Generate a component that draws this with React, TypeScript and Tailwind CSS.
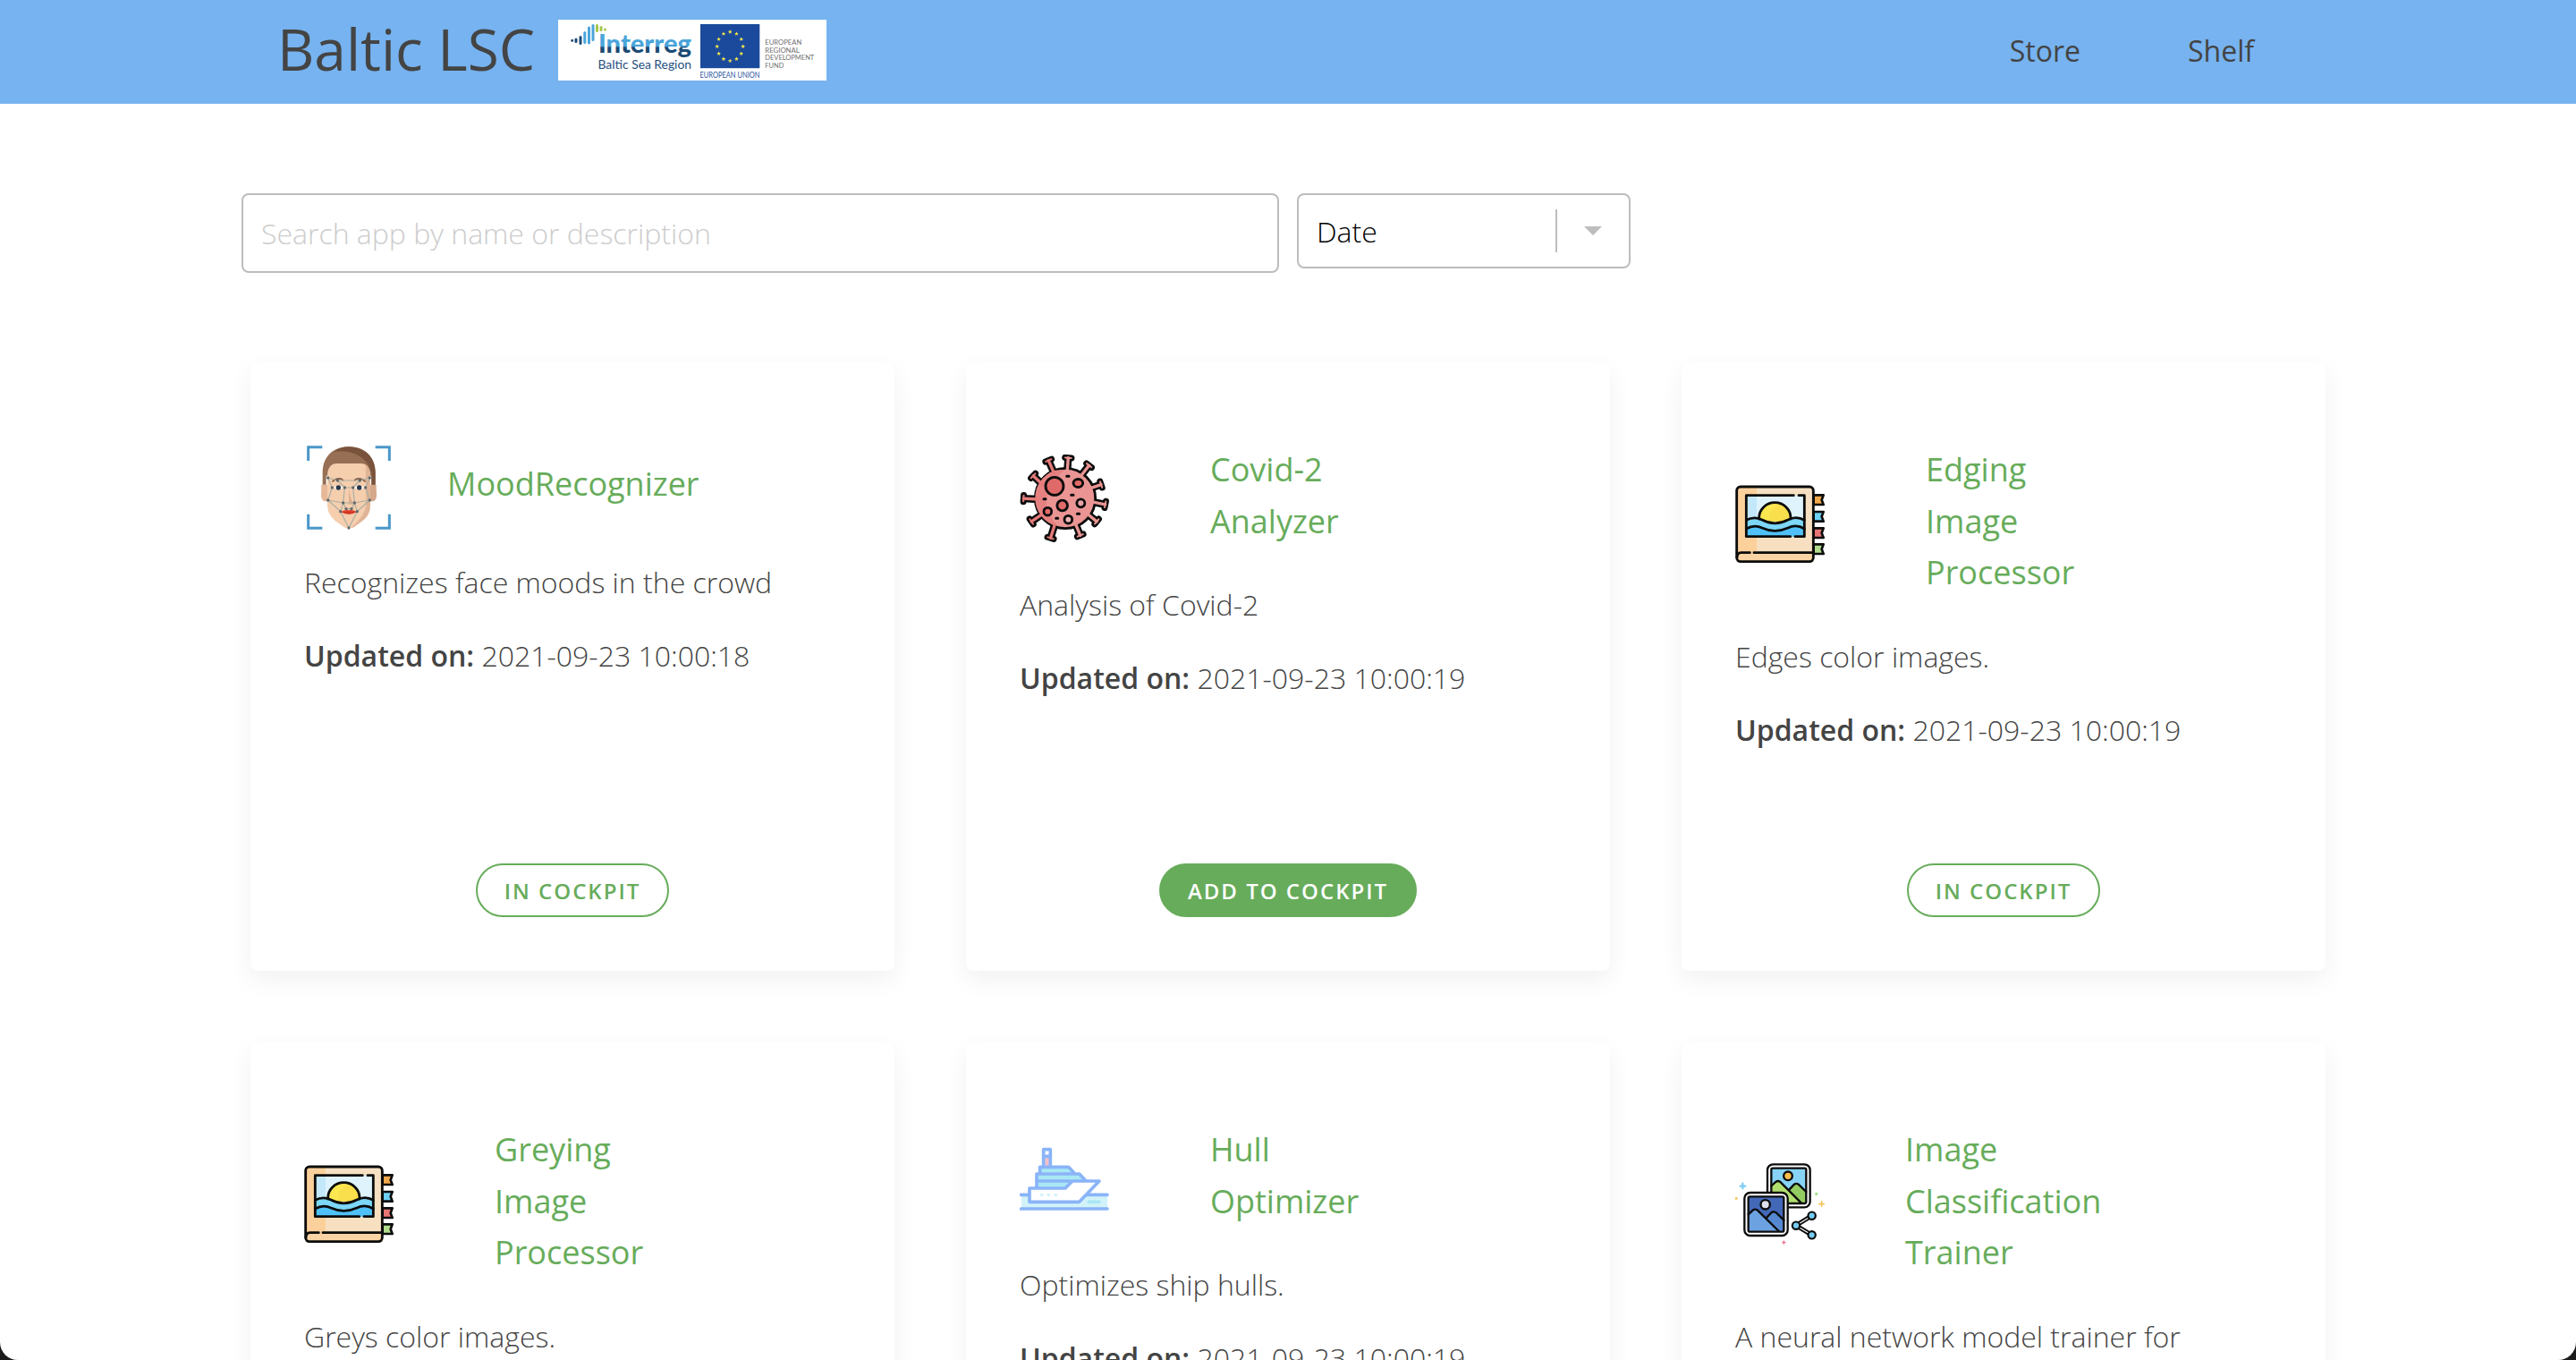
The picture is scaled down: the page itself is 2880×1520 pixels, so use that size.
import React from "react";

const FONT = "font-['Open_Sans','Noto_Sans',sans-serif]";

function Star({ x, y }: { x: number; y: number }) {
  return (
    <path
      transform={`translate(${x} ${y})`}
      d="M0 -2.5 L0.65 -0.8 L2.4 -0.75 L1 0.35 L1.5 2.1 L0 1.1 L-1.5 2.1 L-1 0.35 L-2.4 -0.75 L-0.65 -0.8 Z"
      fill="#f5e94b"
    />
  );
}

function InterregLogo() {
  const stars = Array.from({ length: 12 }, (_, i) => {
    const a = (i * Math.PI) / 6;
    return { x: 192.2 + 14.5 * Math.sin(a), y: 29.8 - 16.2 * Math.cos(a) };
  });
  return (
    <svg viewBox="0 0 300 68" className="h-[68px] w-[300px] bg-white">
      <defs>
        <linearGradient id="duo" gradientUnits="userSpaceOnUse" x1="0" y1="0" x2="0" y2="68">
          <stop offset="0.43" stopColor="#4ba5db" />
          <stop offset="0.46" stopColor="#1c4a74" />
        </linearGradient>
      </defs>
      <g strokeLinecap="round" strokeWidth="3" fill="none">
        <path d="M15.7 23.3v.01M20 22v2.6M25 19.6v6.8" stroke="#1c4a74" />
        <path d="M29.8 14.6v11M34.5 9v17M39 6.6v15.8" stroke="#4ba5db" />
        <path d="M43.5 6.6v6M48 8.4v3M52.5 11v.01" stroke="#a3c748" />
      </g>
      <text x="45" y="37.3" fontFamily="Lato, sans-serif" fontWeight="900" fontSize="28" textLength="104" lengthAdjust="spacingAndGlyphs" fill="url(#duo)">Interreg</text>
      <text x="44.5" y="54.7" fontFamily="Lato, sans-serif" fontSize="14" textLength="104.5" lengthAdjust="spacingAndGlyphs" fill="#1f4f80">Baltic Sea Region</text>
      <rect x="159" y="5" width="66.3" height="49.2" fill="#1b4a9c" />
      {stars.map((s, i) => (
        <Star key={i} x={s.x} y={s.y} />
      ))}
      <text x="158.5" y="64.7" fontFamily="Lato, sans-serif" fontSize="8.6" textLength="67" lengthAdjust="spacingAndGlyphs" fill="#2c559f">EUROPEAN UNION</text>
      <g fontFamily="Lato, sans-serif" fontSize="8.4" fill="#6f6f6f">
        <text x="231.3" y="28" textLength="41" lengthAdjust="spacingAndGlyphs">EUROPEAN</text>
        <text x="231.3" y="36.6" textLength="38.5" lengthAdjust="spacingAndGlyphs">REGIONAL</text>
        <text x="231.3" y="45.2" textLength="55" lengthAdjust="spacingAndGlyphs">DEVELOPMENT</text>
        <text x="231.3" y="53.8" textLength="21" lengthAdjust="spacingAndGlyphs">FUND</text>
      </g>
    </svg>
  );
}

function FaceIcon() {
  const nodes = [
    [110, 147], [142, 156], [217, 156], [250, 147], [124, 180], [166, 180], [194, 180], [236, 180],
    [110, 222], [250, 222], [161, 231], [199, 231], [171, 251], [189, 251], [152, 260], [208, 260], [180, 315],
  ];
  return (
    <svg viewBox="30 30 300 300" className="size-[100px]">
      <path d="M44 90V44H91M269 44H316V90M316 269V316H269M91 316H44V269" fill="none" stroke="#4a97c9" strokeWidth="9" />
      <path d="M88 176Q85 170 92 170H110V226H98Q87 222 87 208Z" fill="#e6b898" />
      <path d="M272 176Q275 170 268 170H250V226H262Q273 222 273 208Z" fill="#d4a88a" />
      <path d="M92 170V130C92 75 128 43 180 43S269 75 269 130V170H256V140H104V170Z" fill="#976f54" />
      <path d="M130 60Q150 43 180 43C235 43 269 80 269 130V170H256V130C245 85 205 52 130 60Z" fill="#79533b" />
      <path d="M108 135Q112 99 140 99H222Q248 99 252 135V240Q252 272 225 292L196 313Q180 320 164 313L135 292Q108 270 108 240Z" fill="#f5ceae" />
      <path d="M236 104Q252 115 252 140V240Q252 272 225 292L196 313L188 315Q238 270 238 235Z" fill="#e0b496" />
      <path d="M180 182V236H200Q186 225 180 182Z" fill="#deb08f" />
      <path d="M124 160Q147 142 162 156M198 156Q215 142 236 160" stroke="#815a41" strokeWidth="5" fill="none" />
      <path d="M129 180Q145 166 162 180Q145 194 129 180ZM198 180Q215 166 232 180Q215 194 198 180Z" fill="#fff" />
      <circle cx="145" cy="180" r="8" fill="#26374a" />
      <circle cx="215" cy="180" r="8" fill="#26374a" />
      <path d="M153 261Q170 252 180 256Q190 252 207 261Q192 270 180 270Q166 270 153 261Z" fill="#e0412b" />
      <path d="M153 261H207Q180 266 153 261Z" fill="#b32718" />
      <path d="M110 147L142 156H217L250 147L236 180L250 222L208 260L180 315L152 260L110 222L124 180ZM142 156L166 180M217 156L194 180M124 180L110 147M166 180H194M166 180L161 231L199 231L194 180M161 231L152 260M199 231L208 260M161 231L171 251H189L199 231M110 222L161 231M250 222L199 231" fill="none" stroke="#a9aea2" strokeWidth="3.5" />
      {nodes.map(([x, y]) => (
        <circle key={`${x}-${y}`} cx={x} cy={y} r="5" fill="#63696b" />
      ))}
    </svg>
  );
}

function VirusIcon() {
  const spikes = [
    [193, 33, 190, 76], [264, 59, 238, 92], [305, 124, 270, 136], [319, 192, 280, 184], [290, 250, 256, 222],
    [234, 297, 218, 258], [133, 306, 148, 258], [68, 250, 106, 224], [41, 171, 90, 174], [74, 94, 108, 126], [126, 42, 146, 88],
  ];
  return (
    <svg viewBox="30 24 300 300" className="size-[100px]">
      {spikes.map(([x, y, bx, by], i) => {
        const l = Math.hypot(x - bx, y - by);
        const ux = (x - bx) / l;
        const uy = (y - by) / l;
        const w = 11;
        const head = `M${x - uy * w - ux * 2} ${y + ux * w - uy * 2}L${x + uy * w - ux * 2} ${y - ux * w - uy * 2}`;
        const stem = `M${bx} ${by}L${x - ux * 2} ${y - uy * 2}`;
        return (
          <g key={i} fill="none" strokeLinecap="round">
            <path d={head} stroke="#0c0c0c" strokeWidth="21" />
            <path d={stem} stroke="#0c0c0c" strokeWidth="25" strokeLinecap="butt" />
          </g>
        );
      })}
      <circle cx="183" cy="171" r="101" fill="#ea9594" stroke="#0c0c0c" strokeWidth="8.5" />
      <path d="M148 77A98 98 0 0 0 150 263C142 230 112 214 122 165C128 130 150 100 182 75Z" fill="#e58180" />
      {spikes.map(([x, y, bx, by], i) => {
        const l = Math.hypot(x - bx, y - by);
        const ux = (x - bx) / l;
        const uy = (y - by) / l;
        const w = 10;
        const c = i < 6 ? "#ea9594" : "#e57b7a";
        return (
          <g key={i} fill="none" stroke={c} strokeLinecap="round">
            <path d={`M${x - uy * w - ux * 2} ${y + ux * w - uy * 2}L${x + uy * w - ux * 2} ${y - ux * w - uy * 2}`} strokeWidth="6" />
            <path d={`M${bx} ${by}L${x - ux * 2} ${y - uy * 2}`} strokeWidth="10" />
          </g>
        );
      })}
      <g stroke="#0c0c0c" strokeWidth="8.5">
        <circle cx="147" cy="130" r="30" fill="#e06a68" />
        <ellipse cx="226" cy="120" rx="16" ry="13.5" fill="#e06a68" />
        <circle cx="173" cy="195" r="17.5" fill="#e06a68" />
        <circle cx="235" cy="187" r="13.5" fill="#e9a3a5" />
        <circle cx="124" cy="215" r="13" fill="#e06a68" />
        <circle cx="193" cy="242" r="13" fill="#f0b5b5" />
      </g>
      <path d="M188 97H195M203 160H210M111 173H117M223 223H230M152 238H158" stroke="#0c0c0c" strokeWidth="9" strokeLinecap="round" />
    </svg>
  );
}

function AlbumIcon() {
  const tags = [
    [86, "#f0a84a"], [142, "#6ed1f5"], [197, "#e87576"], [251, "#b0dc8c"],
  ] as const;
  return (
    <svg viewBox="30 18 300 300" className="size-[100px]">
      {tags.map(([y, c]) => (
        <path key={y} d={`M293 ${y - 16}H326L320 ${y}L326 ${y + 16}H293Z`} fill={c} stroke="#0c0c0c" strokeWidth="8" strokeLinejoin="round" />
      ))}
      <rect x="35" y="42" width="257" height="251" rx="13" fill="#f6e0c1" />
      <path d="M48 42H102V293H48Q35 293 35 280V55Q35 42 48 42Z" fill="#fcd09b" />
      <path d="M36 278Q36 263 50 263H292V293H50Q36 293 36 280Z" fill="#f9d3a3" />
      <rect x="67" y="71" width="195" height="138" fill="#dff3fc" />
      <rect x="67" y="71" width="35" height="138" fill="#c3e8f9" />
      <path d="M110 158V146A53 51 0 0 1 216 146V160Z" fill="#fbe750" />
      <path d="M144 158Q140 115 185 100Q216 112 216 146V160Z" fill="#f9da48" opacity=".6" />
      <path d="M67 153Q94 140 120 153Q163 176 207 153Q235 138 262 153V209H67Z" fill="#7cd7f8" />
      <path d="M67 182Q94 167 120 180Q163 200 207 180Q235 166 262 182V209H67Z" fill="#4fc1f8" />
      <g fill="none" stroke="#0c0c0c" strokeWidth="8.5" strokeLinecap="round" strokeLinejoin="round">
        <path d="M110 150V146A53 51 0 0 1 216 146V150" />
        <path d="M67 154Q94 140 120 153Q163 176 207 153Q235 138 262 154M67 183Q94 167 120 180Q163 200 207 180Q235 166 262 183" />
        <path d="M226 71H67V209H215M243 71H262V209H231" />
        <rect x="35" y="42" width="257" height="251" rx="13" />
        <path d="M36 280Q36 263 50 263H79M93 263H292" />
      </g>
    </svg>
  );
}

function ShipIcon() {
  return (
    <svg viewBox="30 -6 300 300" className="size-[100px]">
      <rect x="36" y="197" width="289" height="46" fill="#d2f2f9" />
      <path d="M35 196H324M35 243H324" stroke="#8ab4f8" strokeWidth="11" strokeLinecap="round" />
      <path d="M262 220H297" stroke="#a8e6f4" strokeWidth="11" strokeLinecap="round" />
      <path d="M98 121V103H194L214 123ZM87 149V126H230L250 149ZM87 171V150H206L182 173Z" fill="#a8e8f4" />
      <rect x="109" y="43" width="25" height="60" fill="#f5c0ca" />
      <rect x="109" y="43" width="25" height="24" fill="#fff" />
      <path d="M62 174H183L207 150H298L230 220H62Z" fill="#fff" />
      <g fill="none" stroke="#8ab4f8" strokeWidth="11" strokeLinejoin="round" strokeLinecap="round">
        <path d="M110 98V44H133V98M110 67H133" />
        <path d="M98 121V103H194L212 122M87 171V126H230L250 147M87 150H200" />
        <path d="M63 174H183L207 150H297L230 220H63Z" />
      </g>
      <path d="M104 196.500v.01M127 196.500v.01M151 196.500v.01" stroke="#d2f2f9" strokeWidth="11" strokeLinecap="round" />
    </svg>
  );
}

function PicturesIcon() {
  return (
    <svg viewBox="0 18 300 300" className="size-[100px]">
      <rect x="108" y="34" width="143" height="144" rx="19" fill="#fff" stroke="#0c0c0c" strokeWidth="7" />
      <rect x="121" y="47" width="117" height="118" rx="5" fill="#86d3f5" />
      <path d="M121 106L137 92Q143 88 150 92L221 165H121Z" fill="#b2e070" />
      <path d="M179 120L198 101Q205 96 212 101L238 126V165H222Z" fill="#93cc60" />
      <g fill="none" stroke="#0c0c0c" strokeWidth="7" strokeLinecap="round" strokeLinejoin="round">
        <path d="M121 106L137 92Q143 88 150 92L221 163M181 119L198 101Q205 96 212 101L238 126" />
        <rect x="121" y="47" width="117" height="118" rx="5" />
        <circle cx="177" cy="73" r="14.500" fill="#f8bd4d" />
      </g>
      <rect x="31" y="129" width="145" height="144" rx="19" fill="#fff" stroke="#0c0c0c" strokeWidth="7" />
      <rect x="44" y="142" width="119" height="118" rx="5" fill="#4368b8" />
      <path d="M44 202L60 187Q67 183 74 187L146 260H44Z" fill="#6ca2e0" />
      <path d="M104 214L122 195Q128 191 136 195L163 221V260H147Z" fill="#5588d0" />
      <g fill="none" stroke="#0c0c0c" strokeWidth="7" strokeLinecap="round" strokeLinejoin="round">
        <path d="M44 202L60 187Q67 183 74 187L146 258M104 214L122 195Q128 191 136 195L163 221" />
        <rect x="44" y="142" width="119" height="118" rx="5" />
        <circle cx="101" cy="169" r="15.500" fill="#dcdfee" />
      </g>
      <path d="M204 239L257 206M204 239L257 271" stroke="#0c0c0c" strokeWidth="15" />
      <path d="M204 239L257 206M204 239L257 271" stroke="#fff" strokeWidth="3.500" />
      <g fill="#76cdf3" stroke="#0c0c0c" strokeWidth="6.500">
        <circle cx="204" cy="239" r="12.500" />
        <circle cx="257" cy="206" r="12.500" />
        <circle cx="257" cy="271" r="12.500" />
      </g>
      <path d="M25 98V115M17 107H34" stroke="#80cdf2" strokeWidth="7" strokeLinecap="round" />
      <path d="M290 158V175M281 167H298" stroke="#f8c460" strokeWidth="5" strokeLinecap="round" />
      <path d="M163 291V301M158 296H168" stroke="#f0718c" strokeWidth="4" strokeLinecap="round" />
      <circle cx="272" cy="133" r="5" fill="#9be080" />
      <circle cx="3" cy="148" r="5" fill="#f8c460" />
    </svg>
  );
}

type App = {
  title: string[];
  titleOffset: string;
  icon: React.ReactNode;
  description: string;
  updated: string;
  inCockpit: boolean;
};

const apps: App[] = [
  { title: ["MoodRecognizer"], titleOffset: "ml-[60px]", icon: <FaceIcon />, description: "Recognizes face moods in the crowd", updated: "2021-09-23 10:00:18", inCockpit: true },
  { title: ["Covid-2", "Analyzer"], titleOffset: "ml-[113px]", icon: <VirusIcon />, description: "Analysis of Covid-2", updated: "2021-09-23 10:00:19", inCockpit: false },
  { title: ["Edging", "Image", "Processor"], titleOffset: "ml-[113px]", icon: <AlbumIcon />, description: "Edges color images.", updated: "2021-09-23 10:00:19", inCockpit: true },
  { title: ["Greying", "Image", "Processor"], titleOffset: "ml-[113px]", icon: <AlbumIcon />, description: "Greys color images.", updated: "2021-09-23 10:00:19", inCockpit: true },
  { title: ["Hull", "Optimizer"], titleOffset: "ml-[113px]", icon: <ShipIcon />, description: "Optimizes ship hulls.", updated: "2021-09-23 10:00:19", inCockpit: true },
  { title: ["Image", "Classification", "Trainer"], titleOffset: "ml-[90px]", icon: <PicturesIcon />, description: "A neural network model trainer for", updated: "2021-09-23 10:00:19", inCockpit: true },
];

function AppCard({ app }: { app: App }) {
  return (
    <article className="flex h-[680px] flex-col rounded-lg bg-white px-[60px] pt-[91px] pb-[60px] shadow-[0_10px_28px_0_rgba(0,0,0,0.06)]">
      <div className="flex items-center">
        <div className="flex h-[90px] items-center pt-2">
          <div className="shrink-0">{app.icon}</div>
        </div>
        <h4 className={`${app.titleOffset} text-[36px] leading-[57.6px] font-medium text-[#67ac5b]`}>
          {app.title.map((line) => (
            <span key={line} className="block">{line}</span>
          ))}
        </h4>
      </div>
      <p className="mt-[39px] text-[32px] leading-[51px] font-light whitespace-nowrap">{app.description}</p>
      <p className="mt-[31px] text-[32px] leading-[51px] font-light whitespace-nowrap">
        <strong className="font-semibold">Updated on:</strong> {app.updated}
      </p>
      <button
        className={
          app.inCockpit
            ? "mt-auto h-[60px] self-center rounded-[30px] border-2 border-[#67ac5b] px-[30px] pt-0.5 text-[24px] font-semibold tracking-[2px] text-[#67ac5b]"
            : "mt-auto h-[60px] self-center rounded-[30px] border-2 border-[#67ac5b] bg-[#67ac5b] px-[30px] pt-0.5 text-[24px] font-semibold tracking-[2px] text-white"
        }
      >
        {app.inCockpit ? "IN COCKPIT" : "ADD TO COCKPIT"}
      </button>
    </article>
  );
}

export default function App() {
  return (
    <div className="h-[1520px] overflow-hidden bg-[#1c1c1c]">
      <div className={`h-[1520px] overflow-hidden rounded-b-[20px] bg-white text-[#444444] ${FONT}`}>
        <header className="flex h-[116px] items-center bg-[#76b3f0] pr-[360px] pl-[310px]">
          <h1 className="pb-1.5 text-[64px] leading-[76px] font-normal">Baltic LSC</h1>
          <div className="ml-[26px] pb-1">
            <InterregLogo />
          </div>
          <nav className="ml-auto flex gap-[120px] pb-0.5 text-[32px]">
            <a>Store</a>
            <a>Shelf</a>
          </nav>
        </header>
        <main className="px-[270px] pt-[100px]">
          <div className="flex items-start gap-5">
            <input
              className="h-[89px] w-[1160px] rounded-lg border-2 border-[#bdbdbd] px-5 text-[32px] font-light placeholder:text-[#cccccc]"
              placeholder="Search app by name or description"
            />
            <div className="flex h-[84px] w-[373px] items-center rounded-lg border-2 border-[#bdbdbd] pr-[30px] pl-5 text-black">
              <span className="pt-0.5 text-[32px] font-light">Date</span>
              <span className="mr-[30px] ml-auto h-12 w-0.5 bg-[#bdbdbd]" />
              <svg viewBox="0 0 20 10" className="h-2.5 w-5">
                <path d="M0 0H20L10 10Z" fill="#bdbdbd" />
              </svg>
            </div>
          </div>
          <div className="mt-[100px] grid grid-cols-[720px_720px_720px] gap-20 px-2.5">
            {apps.map((app) => (
              <AppCard key={app.title.join(" ")} app={app} />
            ))}
          </div>
        </main>
      </div>
    </div>
  );
}
